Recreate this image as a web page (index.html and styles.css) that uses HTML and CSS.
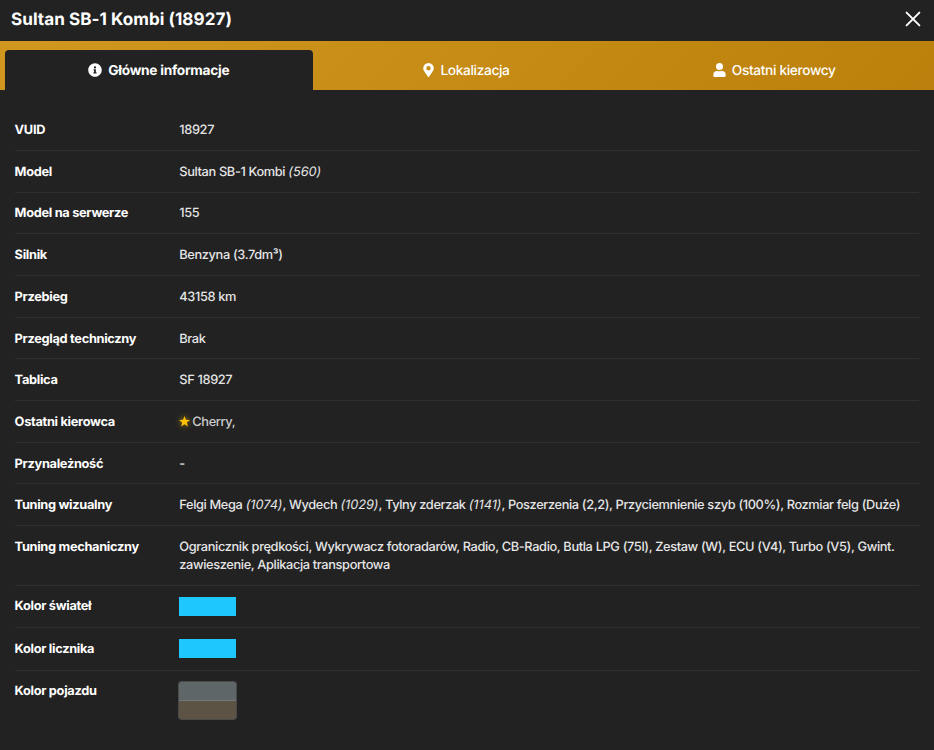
FILE: index.html
```html
<!DOCTYPE html>
<html lang="pl">
<head>
<meta charset="utf-8">
<title>Sultan SB-1 Kombi (18927)</title>
<link rel="stylesheet" href="styles.css">
</head>
<body>
<header class="header">
  <h1 class="title">Sultan SB-1 Kombi (18927)</h1>
  <button class="close" aria-label="Zamknij"><svg viewBox="0 0 16 16"><path d="M1.6 1.6 14.4 14.4M14.4 1.6 1.6 14.4"/></svg></button>
</header>
<nav class="tabs">
  <a class="tab active"><svg class="icon info" viewBox="0 0 512 512"><path d="M256 8C119 8 8 119 8 256s111 248 248 248 248-111 248-248S393 8 256 8zm0 110a42 42 0 1 1 0 84 42 42 0 0 1 0-84zm56 254c0 7-5 12-12 12h-88c-7 0-12-5-12-12v-24c0-7 5-12 12-12h12v-64h-12c-7 0-12-5-12-12v-24c0-7 5-12 12-12h64c7 0 12 5 12 12v100h12c7 0 12 5 12 12z"/></svg><span>Główne informacje</span></a>
  <a class="tab"><svg class="icon pin" viewBox="0 0 384 512"><path d="M172 502C27 291 0 270 0 192a192 192 0 0 1 384 0c0 78-27 99-172 310-10 13-30 13-40 0zm20-230a80 80 0 1 0 0-160 80 80 0 0 0 0 160z"/></svg><span>Lokalizacja</span></a>
  <a class="tab"><svg class="icon user" viewBox="0 0 448 512"><path d="M224 256a128 128 0 1 0 0-256 128 128 0 0 0 0 256zm90 32h-17a174 174 0 0 1-146 0h-17A134 134 0 0 0 0 422v42c0 27 21 48 48 48h352c27 0 48-21 48-48v-42a134 134 0 0 0-134-134z"/></svg><span>Ostatni kierowcy</span></a>
</nav>
<dl class="details">
  <div class="row"><dt>VUID</dt><dd>18927</dd></div>
  <div class="row"><dt>Model</dt><dd>Sultan SB-1 Kombi <i>(560)</i></dd></div>
  <div class="row"><dt>Model na serwerze</dt><dd>155</dd></div>
  <div class="row"><dt>Silnik</dt><dd>Benzyna (3.7dm³)</dd></div>
  <div class="row"><dt>Przebieg</dt><dd>43158 km</dd></div>
  <div class="row"><dt>Przegląd techniczny</dt><dd>Brak</dd></div>
  <div class="row"><dt>Tablica</dt><dd>SF 18927</dd></div>
  <div class="row"><dt>Ostatni kierowca</dt><dd class="driver"><svg class="star" viewBox="0 0 24 24"><path d="m12 0 3.2 8.3 8.8.5-6.900 5.500 2.300 8.700L12 18.200 4.600 23l2.300-8.700L0 8.800l8.800-.5z"/></svg><span>Cherry,</span></dd></div>
  <div class="row"><dt>Przynależność</dt><dd>-</dd></div>
  <div class="row"><dt>Tuning wizualny</dt><dd>Felgi Mega <i>(1074)</i>, Wydech <i>(1029)</i>, Tylny zderzak <i>(1141)</i>, Poszerzenia (2,2), Przyciemnienie szyb (100%), Rozmiar felg (Duże)</dd></div>
  <div class="row"><dt>Tuning mechaniczny</dt><dd>Ogranicznik prędkości, Wykrywacz fotoradarów, Radio, CB-Radio, Butla LPG (75l), Zestaw (W), ECU (V4), Turbo (V5), Gwint. zawieszenie, Aplikacja transportowa</dd></div>
  <div class="row color-row"><dt>Kolor świateł</dt><dd><div class="swatch"></div></dd></div>
  <div class="row color-row"><dt>Kolor licznika</dt><dd><div class="swatch"></div></dd></div>
  <div class="row color-row"><dt>Kolor pojazdu</dt><dd><div class="paint"><div class="primary"></div><div class="secondary"></div></div></dd></div>
</dl>
</body>
</html>
```
FILE: styles.css
```css
* { box-sizing: border-box; }
body {
  margin: 0;
  min-height: 750px;
  background: #222;
  color: #e6e6e6;
  font: 450 12.8px/18px Inter, sans-serif;
  letter-spacing: -0.37px;
  text-rendering: geometricPrecision;
}
.header {
  display: flex;
  justify-content: space-between;
  align-items: center;
  height: 41px;
  padding: 0 13px 2px 11px;
}
.title { margin: 0; font-size: 17.1px; line-height: 24px; font-weight: 700; letter-spacing: 0.04px; color: #fff; }
.close { display: flex; padding: 0 0 1px; border: 0; background: none; }
.close svg { width: 16px; height: 16px; fill: none; stroke: #fff; stroke-width: 1.9; stroke-linecap: round; }
.tabs {
  display: grid;
  grid-template-columns: repeat(3, 1fr);
  height: 49px;
  padding: 9px 6px 0 5px;
  background: linear-gradient(135deg, #d2971f, #bb800b);
}
.tab {
  display: flex;
  align-items: center;
  justify-content: center;
  gap: 6px;
  color: #fff;
  font-size: 13.7px;
  letter-spacing: -0.34px;
}
.tab span { padding-top: 1px; }
.active { background: #222; border-radius: 4px 4px 0 0; font-weight: 650; letter-spacing: -0.27px; }
.icon { height: 14px; fill: #fff; fill-rule: evenodd; margin-bottom: 1px; }
.info { width: 14px; }
.pin { width: 11px; }
.user { width: 13px; }
.details { margin: 0; padding: 19.2px 15px 0; }
.row {
  display: grid;
  grid-template-columns: 164.3px 1fr;
  padding: 12.9px 0 9.8px;
  border-bottom: 1px solid #303030;
}
.row:last-child { border: 0; }
dt { margin-left: -0.4px; font-weight: 750; letter-spacing: -0.31px; color: #fff; }
dd { margin: 0; word-spacing: 0.1px; }
i { letter-spacing: -0.05px; }
.driver { display: flex; align-items: center; gap: 2px; color: #ccc; }
.star { width: 11px; height: 11px; margin-bottom: 2px; fill: #ffc107; filter: drop-shadow(0 0 3px #ffc10799); }
.color-row { padding: 11px 0 10.9px; }
.color-row dt { padding-top: 1.6px; }
.swatch { width: 57px; height: 19px; background: #1fc7ff; }
.paint { width: 59px; height: 39px; margin: -0.4px 0 0 -1px; border: 1px solid #494b4b; border-radius: 3px; overflow: hidden; }
.primary { height: 19px; background: #5f6668; border-bottom: 1px solid #72777a; }
.secondary { height: 18px; background: #5c5344; }
```
